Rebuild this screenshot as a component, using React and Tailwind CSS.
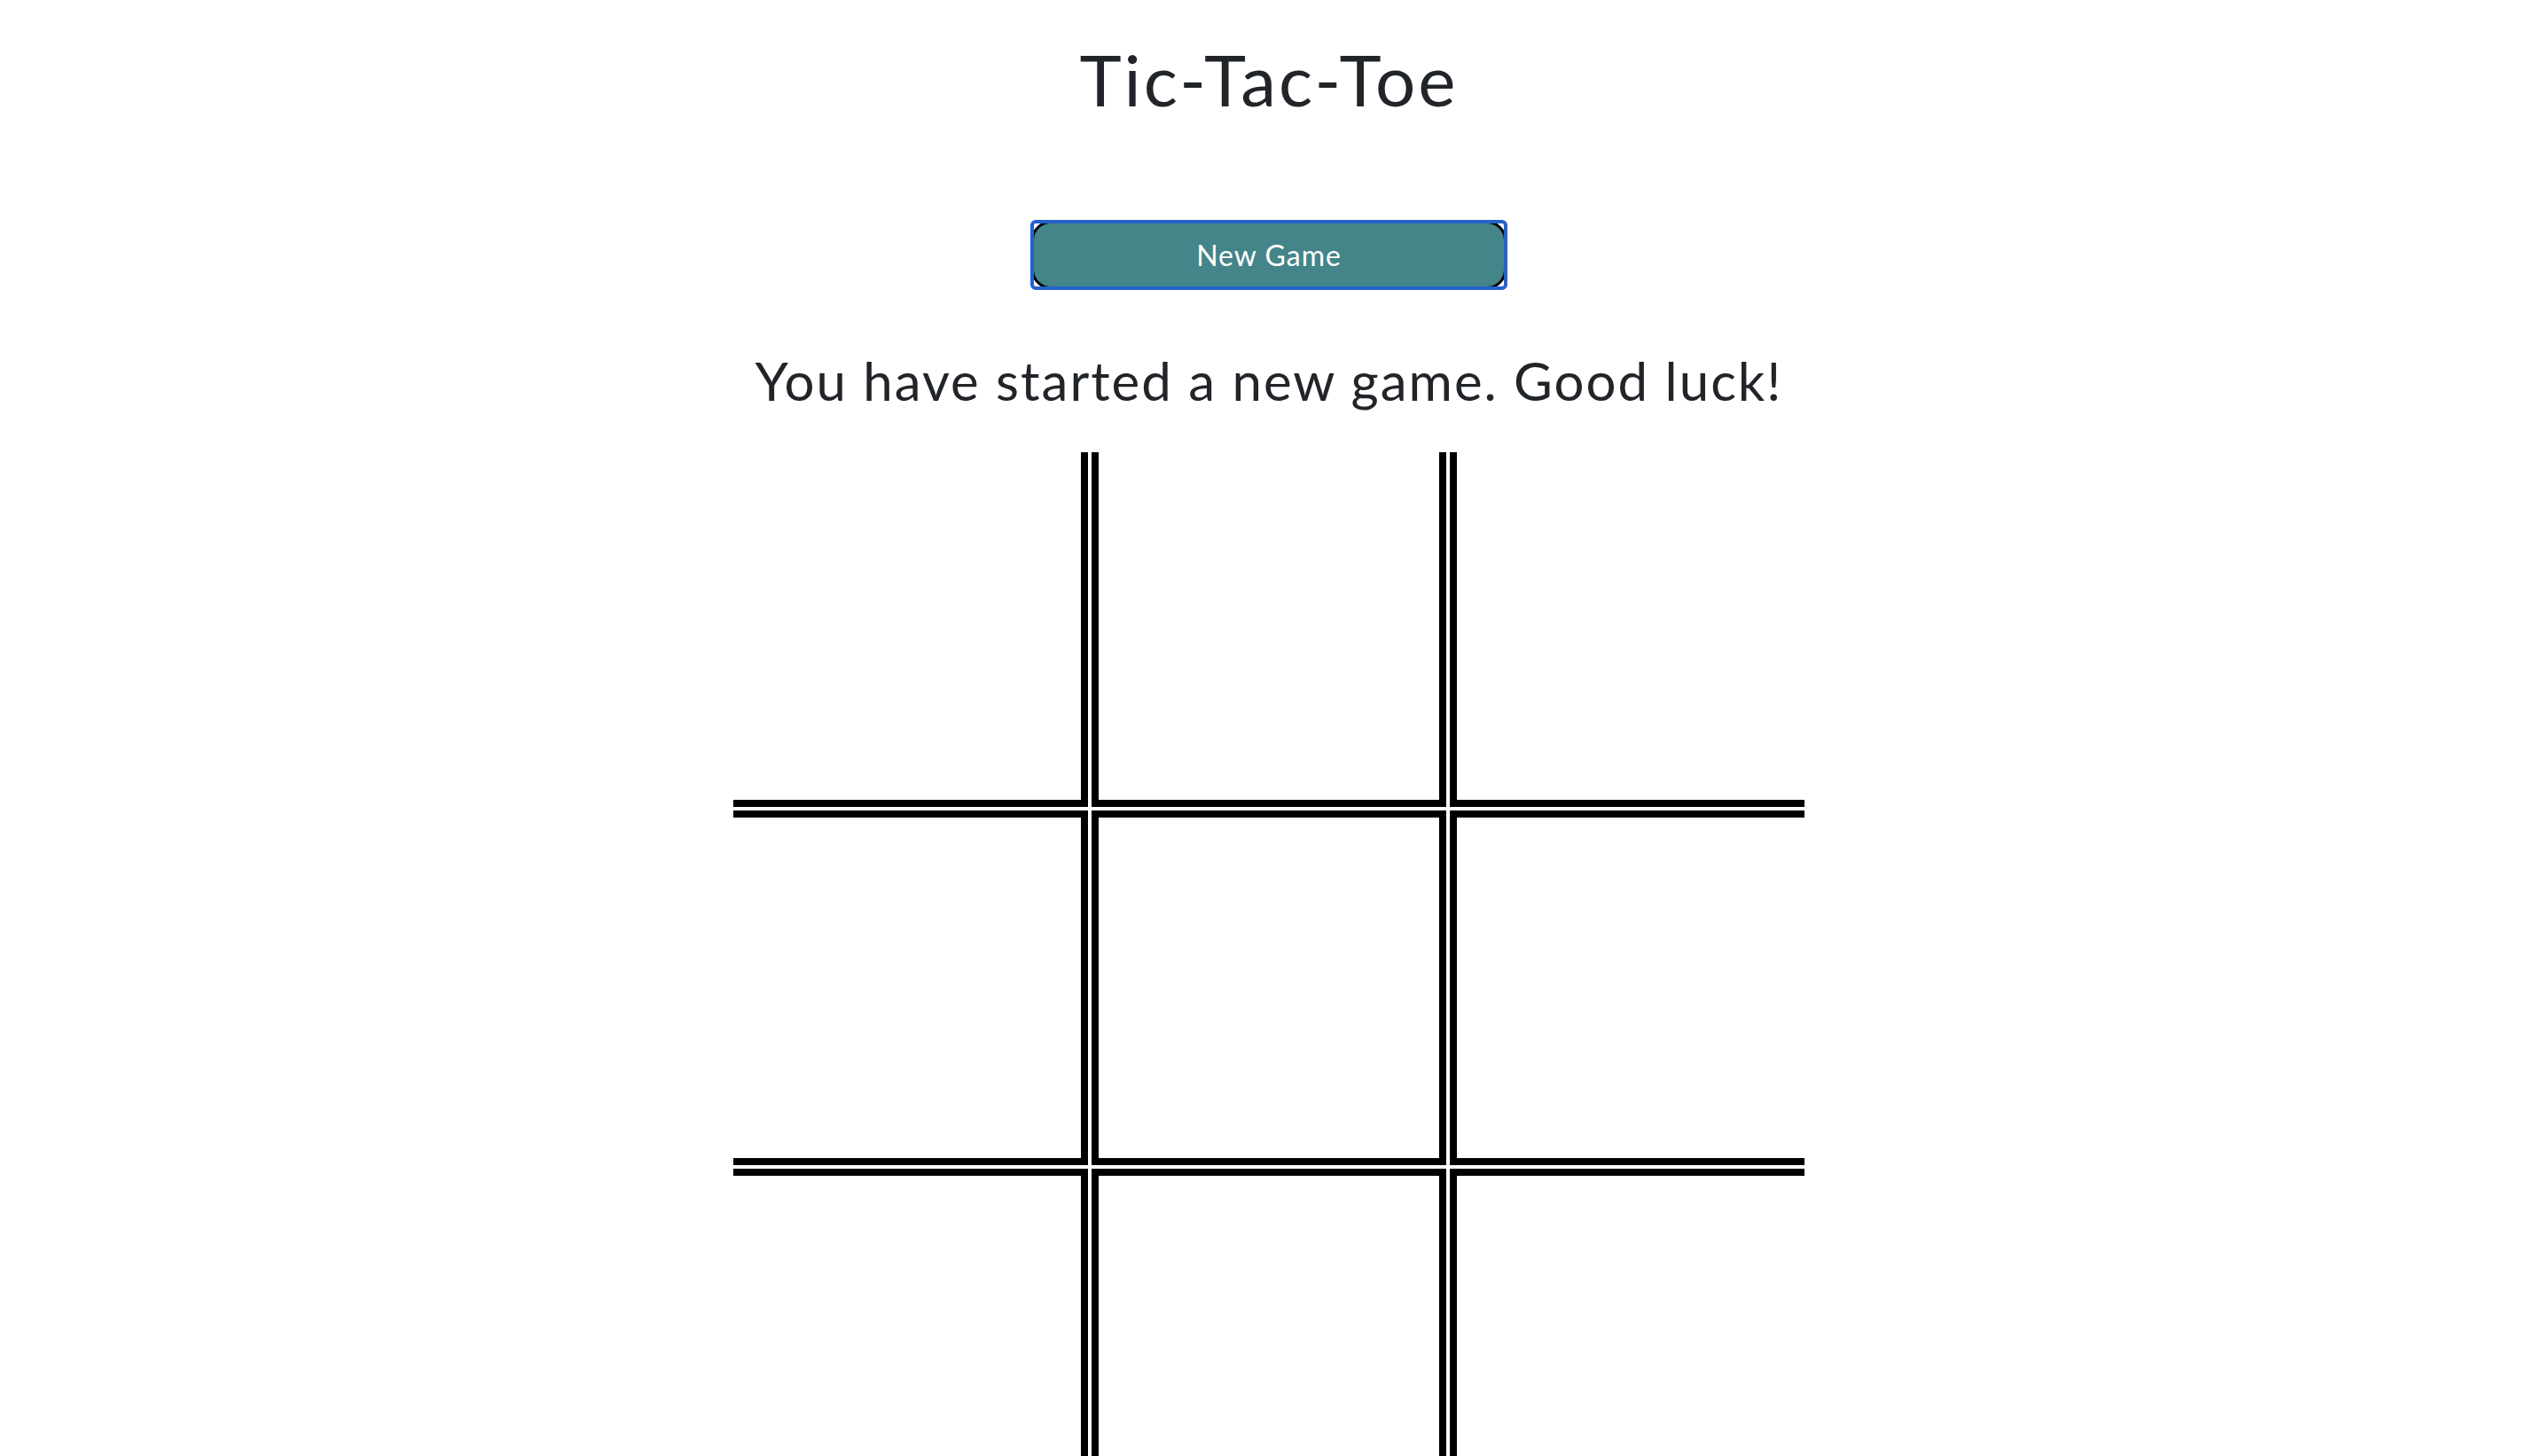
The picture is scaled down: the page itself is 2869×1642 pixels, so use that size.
import { useState } from "react";

const cellBorders = [
  "border-r-8 border-b-8",
  "border-l-8 border-r-8 border-b-8",
  "border-l-8 border-b-8",
  "border-t-8 border-r-8 border-b-8",
  "border-8",
  "border-l-8 border-t-8 border-b-8",
  "border-t-8 border-r-8",
  "border-l-8 border-t-8 border-r-8",
  "border-l-8 border-t-8",
];

const App = () => {
  const [cells, setCells] = useState(Array(9).fill(null));
  const [message, setMessage] = useState("You have started a new game. Good luck!");

  const newGame = () => {
    setCells(Array(9).fill(null));
    setMessage("You have started a new game. Good luck!");
  };

  const play = (i) => {
    if (cells[i]) return;
    const next = [...cells];
    next[i] = next.filter(Boolean).length % 2 === 0 ? "X" : "O";
    setCells(next);
  };

  return (
    <div className="flex flex-col items-center min-h-screen bg-white text-[#212529] pt-[41px] pr-[7px] font-['Lato',sans-serif]">
      <h1 className="text-[80px] leading-[96px] font-normal tracking-[3px]">Tic-Tac-Toe</h1>

      <div className="mt-[111px] w-[538px] h-[79px] border-4 border-[#2461cc] rounded-[6px] overflow-hidden bg-white">
        <button
          onClick={newGame}
          className="-m-[3px] w-[536px] h-[77px] border-[3px] border-black rounded-[22px] bg-[#438589] text-white text-[32px] leading-none tracking-[1px]"
        >
          New Game
        </button>
      </div>

      <p className="mt-[66px] text-[60px] leading-[72px] tracking-[2px]">{message}</p>

      <div className="mt-[45px] grid grid-cols-[400px_400px_400px] gap-[4px]">
        {cellBorders.map((b, i) => (
          <div
            key={i}
            onClick={() => play(i)}
            className={`w-[400px] h-[400px] box-border border-black flex items-center justify-center text-[200px] ${b}`}
          >
            {cells[i]}
          </div>
        ))}
      </div>
    </div>
  );
};

export default App;
